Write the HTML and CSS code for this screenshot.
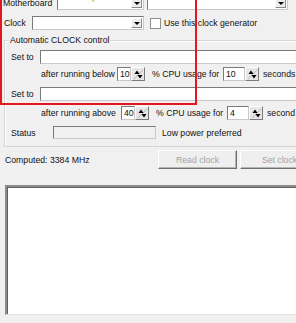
FILE: index.html
```html
<!DOCTYPE html>
<html lang="en">
<head>
    <meta charset="UTF-8">
    <title>Clock control</title>
    <link rel="stylesheet" href="styles.css">
</head>
<body>
    <div class="dialog">
        <!-- Motherboard -->
        <div class="row row-board">
            <span class="label lbl-board">Motherboard</span>
            <div class="combo combo-board"><span class="drop"><i></i></span></div>
            <div class="combo combo-pll"><span class="drop"><i></i></span></div>
        </div>

        <!-- Clock -->
        <div class="row row-clock">
            <span class="label lbl-clock">Clock</span>
            <div class="combo combo-clock"><span class="drop"><i></i></span></div>
            <span class="check"></span>
            <span class="check-text">Use this clock generator</span>
        </div>

        <!-- Automatic control -->
        <div class="group">
            <span class="legend">Automatic CLOCK control</span>

            <div class="row row-set">
                <span class="label lbl-set">Set to</span>
                <div class="edit edit-wide"></div>
            </div>

            <div class="row row-after first">
                <span class="label lbl-below">after running below</span>
                <div class="spin spin-small">
                    <div class="edit">10</div>
                    <span class="spin-btn"><svg width="11" height="11" viewBox="0 0 11 11"><path d="M1 10 L10 1" stroke="#b8b8b8"/><path d="M1.5 5 L4 1.5 L6.5 5 Z" fill="#000"/><path d="M4.5 6 L7 9.5 L9.5 6 Z" fill="#000"/></svg></span>
                </div>
                <span class="label lbl-cpu">% CPU usage for</span>
                <div class="spin spin-large">
                    <div class="edit">10</div>
                    <span class="spin-btn"><svg width="11" height="11" viewBox="0 0 11 11"><path d="M1 10 L10 1" stroke="#b8b8b8"/><path d="M1.5 5 L4 1.5 L6.5 5 Z" fill="#000"/><path d="M4.5 6 L7 9.5 L9.5 6 Z" fill="#000"/></svg></span>
                </div>
                <span class="label lbl-sec">seconds</span>
            </div>

            <div class="row row-set second">
                <span class="label lbl-set">Set to</span>
                <div class="edit edit-wide"></div>
            </div>

            <div class="row row-after third">
                <span class="label lbl-above">after running above</span>
                <div class="spin spin-small">
                    <div class="edit">40</div>
                    <span class="spin-btn"><svg width="11" height="11" viewBox="0 0 11 11"><path d="M1 10 L10 1" stroke="#b8b8b8"/><path d="M1.5 5 L4 1.5 L6.5 5 Z" fill="#000"/><path d="M4.5 6 L7 9.5 L9.5 6 Z" fill="#000"/></svg></span>
                </div>
                <span class="label lbl-cpu">% CPU usage for</span>
                <div class="spin spin-large">
                    <div class="edit">4</div>
                    <span class="spin-btn"><svg width="11" height="11" viewBox="0 0 11 11"><path d="M1 10 L10 1" stroke="#b8b8b8"/><path d="M1.5 5 L4 1.5 L6.5 5 Z" fill="#000"/><path d="M4.5 6 L7 9.5 L9.5 6 Z" fill="#000"/></svg></span>
                </div>
                <span class="label lbl-sec">second</span>
            </div>

            <div class="row row-status">
                <span class="label lbl-status">Status</span>
                <div class="edit edit-status"></div>
                <span class="label lbl-power">Low power preferred</span>
            </div>
        </div>

        <!-- Computed + buttons -->
        <div class="row row-computed">
            <span class="label lbl-computed">Computed: 3384 MHz</span>
            <button class="btn" disabled>Read clock</button>
            <button class="btn" disabled>Set clock</button>
        </div>

        <!-- Log -->
        <div class="log"></div>
    </div>

    <!-- overlays -->
    <span class="watermark">www.pc0359.cn</span>
    <div class="highlight"></div>
</body>
</html>
```

FILE: styles.css
```css
* { margin: 0; padding: 0; box-sizing: border-box; }
body {
    font-family: "Liberation Sans", Arial, sans-serif;
    font-size: 8.7px;
    background: #f0f0f0;
    color: #111;
    width: 296px;
    height: 323px;
    overflow: hidden;
    position: relative;
}
.dialog { width: 340px; display: flex; flex-direction: column; }

.row { display: flex; align-items: center; height: 14px; flex-shrink: 0; }
.label { white-space: nowrap; flex-shrink: 0; }

/* Inputs */
.edit {
    height: 14px;
    background: #fff;
    border: 1px solid;
    border-color: #7a7a7a #c9c9c9 #c9c9c9 #7a7a7a;
    line-height: 12px;
    padding-left: 2px;
    flex-shrink: 0;
}
.combo {
    height: 14px;
    background: #fff;
    border: 1px solid;
    border-color: #7a7a7a #c9c9c9 #c9c9c9 #7a7a7a;
    display: flex;
    justify-content: flex-end;
    align-items: center;
    padding-right: 1px;
    flex-shrink: 0;
}
.drop {
    width: 11px;
    height: 10px;
    background: #ececec;
    border: 1px solid;
    border-color: #fff #8a8a8a #8a8a8a #fff;
    display: flex;
    align-items: center;
    justify-content: center;
}
.drop i {
    width: 0; height: 0;
    border-left: 3px solid transparent;
    border-right: 3px solid transparent;
    border-top: 3px solid #000;
}

/* Row 1 */
.row-board { margin-top: -4px; padding-left: 3px; }
.lbl-board { width: 54px; }
.combo-board { width: 87px; }
.combo-pll { width: 141px; margin-left: 3px; }

/* Row 2 */
.row-clock { margin-top: 6px; padding-left: 4px; }
.lbl-clock { width: 28px; }
.combo-clock { width: 112px; }
.check {
    width: 11px; height: 11px;
    margin-left: 6px;
    background: #fff;
    border: 1px solid #8e8f8f;
}
.check-text { margin-left: 3px; white-space: nowrap; }

/* Group box */
.group {
    margin: 10px 0 0 4px;
    border: 1px solid #d4d4d4;
    box-shadow: inset 1px 1px #fff;
    padding: 0 0 7px 0;
    display: flex;
    flex-direction: column;
}
.legend {
    align-self: flex-start;
    margin: -6px 0 0 4px;
    padding: 0 1px;
    height: 11px;
    line-height: 11px;
    background: #f0f0f0;
}
.row-set { margin-top: 4px; padding-left: 6px; }
.row-set.second { margin-top: 6px; }
.lbl-set { width: 29px; }
.edit-wide { flex: 1; }

.row-after { padding-left: 36px; }
.row-after.first { margin-top: 3px; }
.row-after.third { margin-top: 5px; }
.lbl-below { width: 76px; }
.lbl-above { width: 80px; }
.lbl-cpu { width: 71px; margin-left: 7px; }
.lbl-sec { margin-left: 4px; }

.spin { display: flex; flex-shrink: 0; }
.spin-small .edit { width: 14px; }
.spin-large .edit { width: 22px; }
.spin-btn {
    width: 14px;
    height: 14px;
    background: #e6e6e6;
    border: 1px solid;
    border-color: #fff #7a7a7a #7a7a7a #fff;
    display: flex;
    align-items: center;
    justify-content: center;
}

.row-status { margin-top: 6px; padding-left: 6px; height: 13px; }
.lbl-status { width: 42px; }
.edit-status { width: 103px; height: 13px; background: #f0f0f0; }
.lbl-power { margin-left: 6px; }

/* Computed + buttons */
.row-computed { margin-top: 3px; height: 19px; padding-left: 5px; }
.lbl-computed { width: 153px; }
.btn {
    width: 79px;
    height: 19px;
    font: inherit;
    color: #a3a3a3;
    background: #efefef;
    border: 1px solid;
    border-color: #fff #6e6e6e #6e6e6e #fff;
    box-shadow: inset -1px -1px #b5b5b5;
    flex-shrink: 0;
}
.btn + .btn { margin-left: 3px; }

/* Log area */
.log {
    margin: 16px 0 0 5px;
    height: 130px;
    background: #fff;
    border-top: 2px solid #8c8c8c;
    border-left: 2px solid #8c8c8c;
    border-bottom: 1px solid #e3e3e3;
    box-shadow: inset 1px 1px #5f5f5f;
    flex-shrink: 0;
}

/* Overlays */
.watermark {
    position: absolute;
    top: -9px;
    left: 62px;
    font-size: 10px;
    font-weight: bold;
    color: #8cbf3f;
    letter-spacing: 1px;
    opacity: 0.75;
}
.highlight {
    position: absolute;
    left: 0;
    top: -10px;
    width: 197px;
    height: 115px;
    border: 2px solid #e5161e;
}
```
